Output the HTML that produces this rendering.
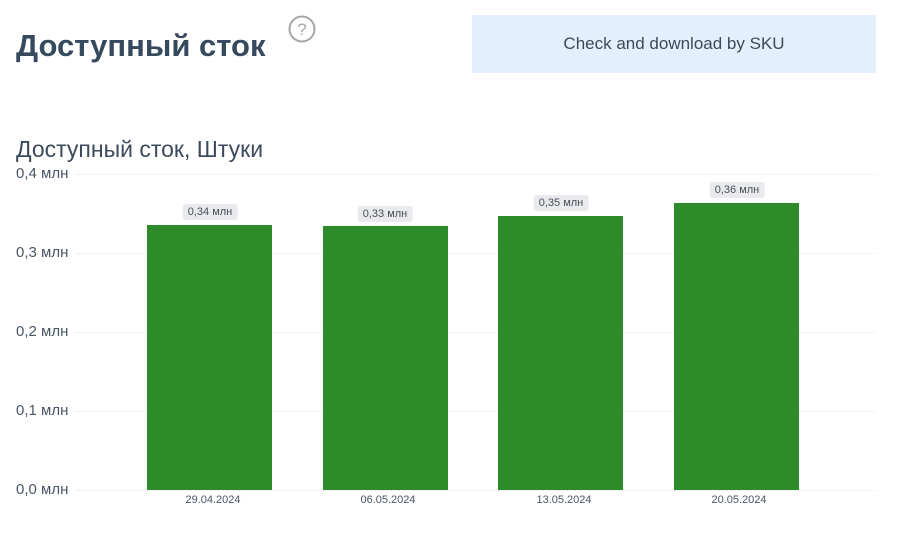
<!DOCTYPE html>
<html><head><meta charset="utf-8"><style>
body{margin:0;width:911px;height:538px;background:#fff;font-family:"Liberation Sans",sans-serif;position:relative;overflow:hidden;color:#3b4a5c}
.a{position:absolute}
.grid{position:absolute;left:76px;width:800px;border-top:1px dotted #e4e8ec}
.yl{position:absolute;left:16px;font-size:15px;color:#4a5668}
.bar{position:absolute;background:#2e8b2a;width:125px}
.pill{position:absolute;background:#e8eaed;border-radius:3px;font-size:11px;color:#4a4f57;padding:2px 5px;transform:translateX(-50%);white-space:nowrap}
.xl{position:absolute;top:494px;font-size:11px;color:#4a5668;transform:translateX(-50%)}
</style></head><body>
<div class="a" style="left:16px;top:28px;font-size:31px;font-weight:bold;color:#36495e">Доступный сток</div>
<svg class="a" style="left:288px;top:15px" width="28" height="28"><circle cx="14" cy="14" r="12.5" fill="none" stroke="#a6a6a6" stroke-width="2"/><text x="14" y="20" font-size="17" text-anchor="middle" fill="#a6a6a6" font-family="Liberation Sans">?</text></svg>
<div class="a" style="left:472px;top:15px;width:404px;height:58px;background:#e3effd;font-size:17px;line-height:58px;text-align:center;color:#3d4a5a">Check and download by SKU</div>
<div class="a" style="left:16px;top:136px;font-size:23px;color:#3d4a5c">Доступный сток, Штуки</div>
<div class="grid" style="top:174px"></div><div class="grid" style="top:253px"></div><div class="grid" style="top:332px"></div><div class="grid" style="top:411px"></div><div class="grid" style="top:490px"></div>
<div class="yl" style="top:165px">0,4 млн</div>
<div class="yl" style="top:244px">0,3 млн</div>
<div class="yl" style="top:323px">0,2 млн</div>
<div class="yl" style="top:402px">0,1 млн</div>
<div class="yl" style="top:481px">0,0 млн</div>
<div class="bar" style="left:147px;top:225px;height:265px"></div>
<div class="bar" style="left:323px;top:226px;height:264px"></div>
<div class="bar" style="left:498px;top:216px;height:274px"></div>
<div class="bar" style="left:674px;top:203px;height:287px"></div>
<div class="pill" style="left:210px;top:204px">0,34 млн</div>
<div class="pill" style="left:385px;top:206px">0,33 млн</div>
<div class="pill" style="left:561px;top:195px">0,35 млн</div>
<div class="pill" style="left:737px;top:182px">0,36 млн</div>
<div class="xl" style="left:213px">29.04.2024</div>
<div class="xl" style="left:388px">06.05.2024</div>
<div class="xl" style="left:564px">13.05.2024</div>
<div class="xl" style="left:739px">20.05.2024</div>
</body></html>
